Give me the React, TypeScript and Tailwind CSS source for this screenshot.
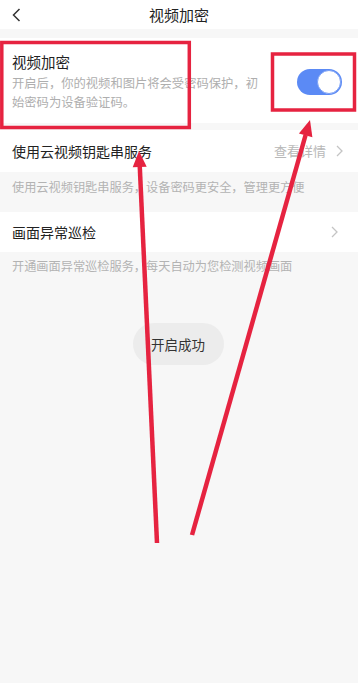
import React from 'react';

const font = { fontFamily: '"Noto Sans CJK SC", "Noto Sans", sans-serif' };

function Chevron({ className = '' }: { className?: string }) {
  return (
    <svg width="7" height="12" viewBox="0 0 7 12" className={className}>
      <polyline points="1,1 6,6 1,11" fill="none" stroke="#c4c4c4" strokeWidth="1.3" />
    </svg>
  );
}

function Annotations() {
  return (
    <svg className="absolute inset-0 pointer-events-none" width="358" height="683" viewBox="0 0 358 683">
      <rect x="1.8" y="42.5" width="187.5" height="85" fill="none" stroke="#e62340" strokeWidth="3.5" />
      <rect x="272.5" y="54" width="82" height="56" fill="none" stroke="#e62340" strokeWidth="3.5" />
      <line x1="157" y1="543" x2="139.7" y2="165" stroke="#e62340" strokeWidth="4.5" />
      <polygon points="139,151 146.7,166.7 132.7,167.3" fill="#e62340" />
      <line x1="192" y1="535" x2="305.6" y2="135" stroke="#e62340" strokeWidth="4.5" />
      <polygon points="310,120 312.4,137.3 298.9,133.5" fill="#e62340" />
    </svg>
  );
}

export default function App() {
  return (
    <div className="relative w-full h-[683px] bg-[#f7f7f7] overflow-hidden" style={font}>
      <div className="h-[29px] bg-white grid grid-cols-[60px_1fr_60px] items-center">
        <div className="pl-[12px] flex items-center">
          <svg width="9" height="14" viewBox="0 0 9 14">
            <polyline points="7.5,1 1.5,7 7.5,13" fill="none" stroke="#333" strokeWidth="1.5" />
          </svg>
        </div>
        <div className="text-center text-[15px] text-[#222] leading-none">视频加密</div>
        <div />
      </div>

      <div className="mt-[9px] bg-white flex items-center justify-between pl-3 pr-[16px] pt-[13px] pb-[11px]">
        <div className="w-[252px]">
          <div className="text-[14.5px] leading-[22px] text-[#222]">视频加密</div>
          <div className="mt-[1px] text-[12.3px] leading-[19px] text-[#aeaeae]">
            开启后，你的视频和图片将会受密码保护，初始密码为设备验证码。
          </div>
        </div>
        <div className="w-[45px] h-[26px] rounded-full bg-[#5b8af5] flex items-center justify-end pr-[1px]">
          <div className="w-[24px] h-[24px] rounded-full bg-white border border-[#7aa0f5]" />
        </div>
      </div>

      <div className="mt-[7px] h-[42px] bg-white flex items-center justify-between pl-3 pr-[15px]">
        <span className="text-[14px] text-[#222]">使用云视频钥匙串服务</span>
        <div className="flex items-center gap-[10px]">
          <span className="text-[13px] text-[#b8b8b8]">查看详情</span>
          <Chevron />
        </div>
      </div>
      <div className="h-[40px] pl-3 pt-[6px] text-[12.2px] leading-[18px] text-[#b3b3b3]">
        使用云视频钥匙串服务，设备密码更安全，管理更方便
      </div>

      <div className="h-[40px] bg-white flex items-center justify-between pl-3 pr-[20px]">
        <span className="text-[14px] text-[#222]">画面异常巡检</span>
        <Chevron />
      </div>
      <div className="h-[40px] pl-3 pt-[5px] text-[12.2px] leading-[18px] text-[#b3b3b3]">
        开通画面异常巡检服务，每天自动为您检测视频画面
      </div>

      <div className="mt-[31px] flex justify-center">
        <div className="w-[91px] h-[42px] rounded-full bg-[#ececec] flex items-center justify-center text-[13.5px] text-[#333] ml-[-2px]">
          开启成功
        </div>
      </div>

      <Annotations />
    </div>
  );
}
